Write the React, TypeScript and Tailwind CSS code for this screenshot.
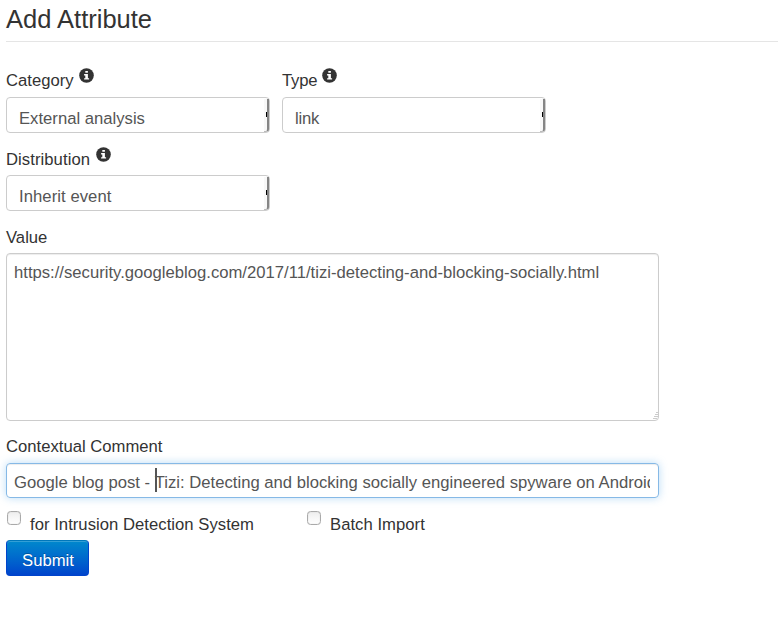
import React from "react";

function Info() {
  return (
    <svg width="15" height="15" viewBox="0 0 15 15" className="block">
      <circle cx="7.5" cy="7.5" r="7.3" fill="#333" />
      <path d="M6.3 3h2.6v1.8H6.3zM5.1 6h3.8v4.2h1.2v1.4H5.1v-1.4h1.2V7.4H5.1z" fill="#fff" />
    </svg>
  );
}

function Select({ text }: { text: string }) {
  return (
    <div className="relative h-9 w-[264px] rounded border border-[#ccc] bg-white pl-3 leading-[42px] text-[#555]">
      {text}
      <div className="absolute right-0 top-px h-[33px] w-[5px] rounded-br-[3px] border-b border-r-2 border-b-[#bbb] border-r-[#858585] bg-[#f8f8f8]" />
      <div className="absolute right-0.5 top-3.5 h-[5px] w-px bg-black" />
    </div>
  );
}

function Field({ label, text }: { label: string; text: string }) {
  return (
    <div className="w-[276px]">
      <div className="flex h-[29px] gap-[5px] leading-[26px]">
        <span>{label}</span>
        <Info />
      </div>
      <Select text={text} />
    </div>
  );
}

function Check({ label }: { label: string }) {
  return (
    <label className="flex w-[300px] gap-[9px] leading-[28px] tracking-[0.03px]">
      <span className="ml-px h-3.5 w-3.5 rounded-[3.5px] border border-[#aaa] bg-linear-to-b from-[#eee] to-white shadow-[inset_0_0_1px_rgba(0,0,0,0.25)]" />
      <span>{label}</span>
    </label>
  );
}

export default function App() {
  return (
    <div className="h-[628px] w-[778px] overflow-hidden bg-white pl-1.5 font-['Liberation_Sans',sans-serif] text-[16.67px] text-[#333]">
      <h1 className="h-[42px] border-b border-[#e5e5e5] text-[25.5px] leading-[38px]">Add Attribute</h1>
      <div className="flex pt-[26px]">
        <Field label="Category" text="External analysis" />
        <div className="tracking-[-0.2px]">
          <Field label="Type" text="link" />
        </div>
      </div>
      <div className="-mb-px pt-[14px] tracking-[0.06px]">
        <div className="w-[276px]">
          <div className="flex h-7 gap-[6px] leading-[26px]">
            <span>Distribution</span>
            <Info />
          </div>
          <Select text="Inherit event" />
        </div>
      </div>
      <div className="pt-4 leading-[22px]">
        <div className="pt-px leading-[21px]">Value</div>
      </div>
      <div className="relative mt-[5px] h-[168px] w-[653px] rounded border border-[#ccc] px-[7px] pt-2 leading-[22px] text-[#555] shadow-[inset_0_1px_1px_rgba(0,0,0,0.075)]">
        https://security.googleblog.com/2017/11/tizi-detecting-and-blocking-socially.html
        <svg className="absolute bottom-0 right-0" width="5" height="9" viewBox="0 0 5 9">
          <path d="M3 1.5h2M2 3.5h3M1 5.5h4M0 7.5h4" stroke="#ccc" />
        </svg>
      </div>
      <div className="mt-[15px] leading-[22px]">Contextual Comment</div>
      <div className="mt-[5px] h-[35px] w-[653px] rounded border border-[#86b9e6] pl-[7px] pr-2 leading-[38px] text-[#555] shadow-[inset_0_1px_1px_rgba(0,0,0,0.075),0_0_8px_rgba(82,168,236,0.4)]">
        <div className="h-[33px] overflow-hidden whitespace-nowrap">
          Google blog post -{" "}
          <span className="relative">
            <span className="absolute left-0 -top-[5px] h-6 w-0.5 bg-[#555]" />
            Tizi: Detecting and blocking socially engineered spyware on Android
          </span>
        </div>
      </div>
      <div className="mt-[13px] flex h-[29px]">
        <Check label="for Intrusion Detection System" />
        <Check label="Batch Import" />
      </div>
      <button className="block h-9 w-[83px] rounded border border-[#04c] border-t-[#07b] bg-linear-to-b from-[#08c] to-[#04c] text-white shadow-[inset_0_1px_0_rgba(255,255,255,0.2)] [text-shadow:0_-1px_0_rgba(0,0,0,0.25)]">
        <span className="block pl-px pt-[3px] leading-[33px]">Submit</span>
      </button>
    </div>
  );
}
